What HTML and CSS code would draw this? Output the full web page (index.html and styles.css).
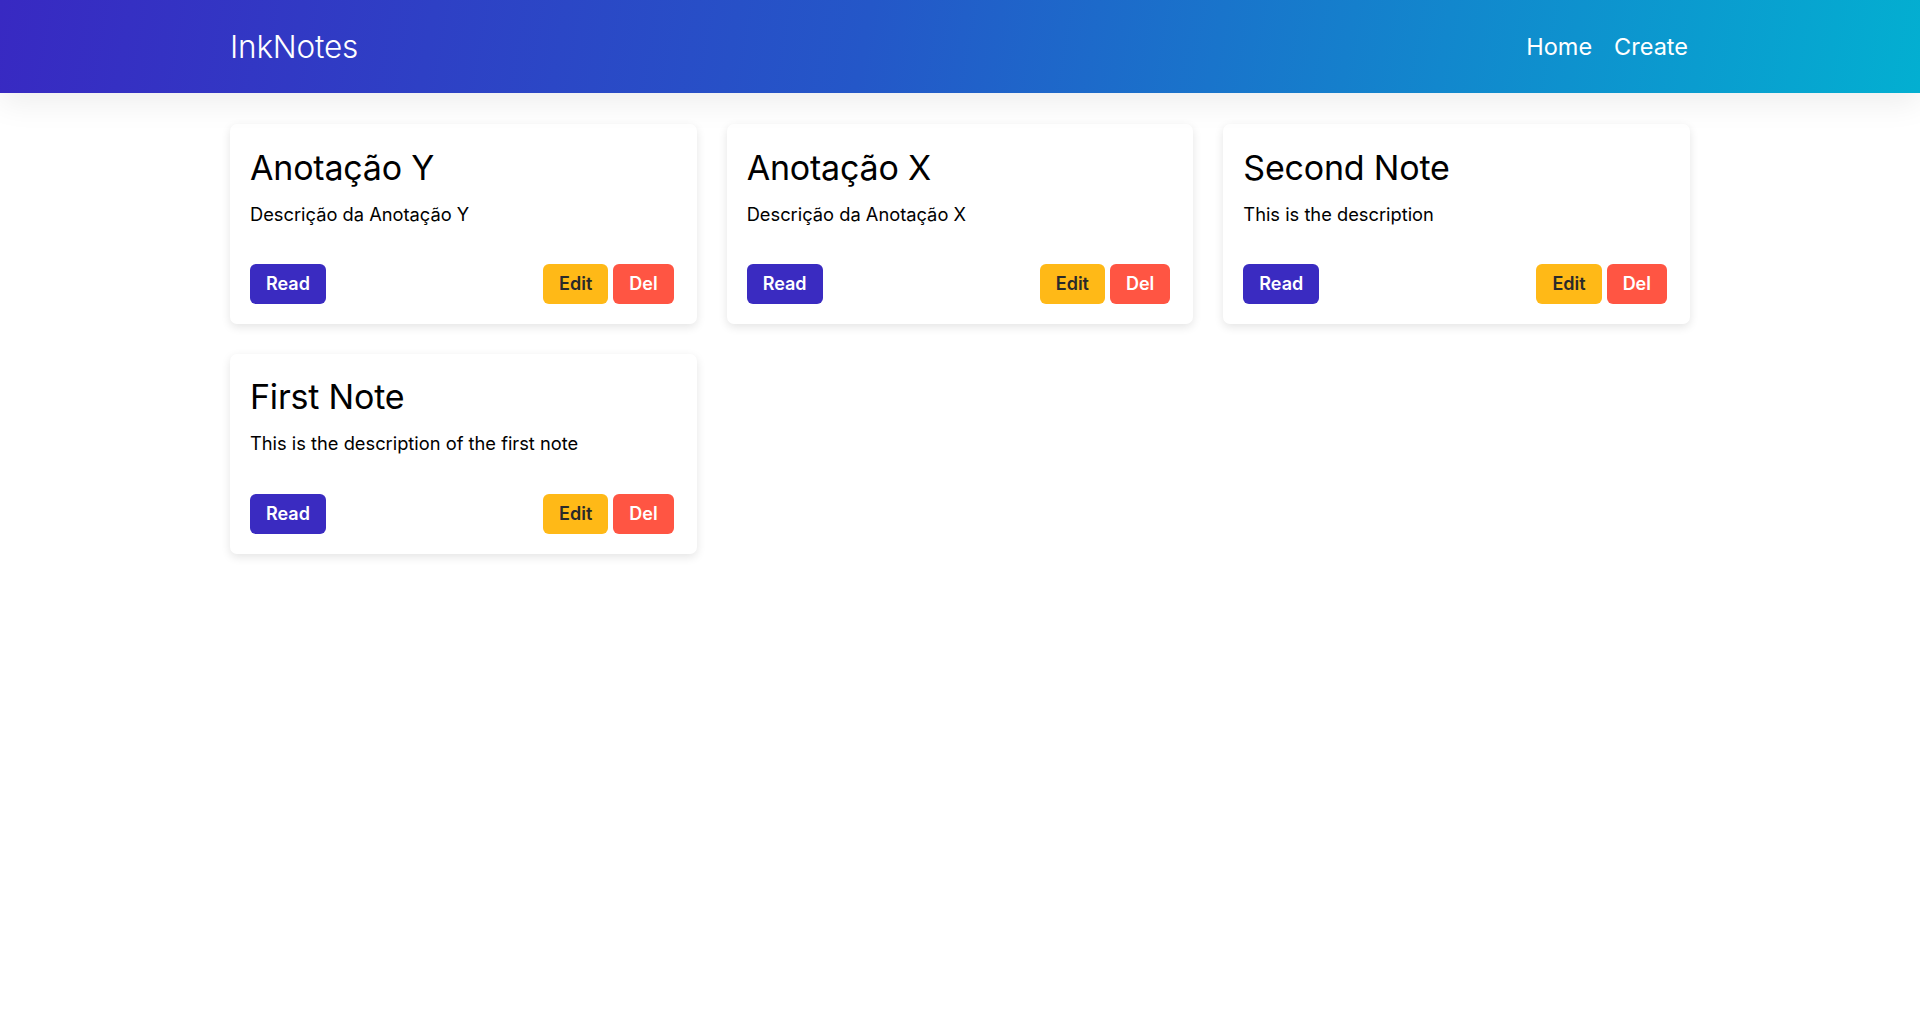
FILE: index.html
```html
<!DOCTYPE html>
<html lang="en">
<head>
<meta charset="utf-8">
<title>InkNotes</title>
<link rel="stylesheet" href="styles.css">
</head>
<body>
<header class="navbar">
  <div class="nav-inner">
    <a class="brand" href="#">InkNotes</a>
    <nav class="nav-links">
      <a href="#">Home</a>
      <a href="#">Create</a>
    </nav>
  </div>
</header>
<main class="notes">
  <article class="card">
    <h2 class="card-title">Anotação Y</h2>
    <p class="card-text">Descrição da Anotação Y</p>
    <div class="card-actions">
      <a class="btn btn-read" href="#">Read</a>
      <div class="btn-group">
        <a class="btn btn-edit" href="#">Edit</a>
        <a class="btn btn-del" href="#">Del</a>
      </div>
    </div>
  </article>
  <article class="card">
    <h2 class="card-title">Anotação X</h2>
    <p class="card-text">Descrição da Anotação X</p>
    <div class="card-actions">
      <a class="btn btn-read" href="#">Read</a>
      <div class="btn-group">
        <a class="btn btn-edit" href="#">Edit</a>
        <a class="btn btn-del" href="#">Del</a>
      </div>
    </div>
  </article>
  <article class="card">
    <h2 class="card-title">Second Note</h2>
    <p class="card-text">This is the description</p>
    <div class="card-actions">
      <a class="btn btn-read" href="#">Read</a>
      <div class="btn-group">
        <a class="btn btn-edit" href="#">Edit</a>
        <a class="btn btn-del" href="#">Del</a>
      </div>
    </div>
  </article>
  <article class="card">
    <h2 class="card-title">First Note</h2>
    <p class="card-text">This is the description of the first note</p>
    <div class="card-actions">
      <a class="btn btn-read" href="#">Read</a>
      <div class="btn-group">
        <a class="btn btn-edit" href="#">Edit</a>
        <a class="btn btn-del" href="#">Del</a>
      </div>
    </div>
  </article>
</main>
</body>
</html>
```

FILE: styles.css
```css
* { box-sizing: border-box; }

html, body {
  margin: 0;
  padding: 0;
  background: #ffffff;
  font-family: Inter, "Noto Sans", "Liberation Sans", sans-serif;
  color: #000;
}

body { min-height: 100vh; }

a { text-decoration: none; }

.navbar {
  height: 93px;
  background: linear-gradient(100deg, #3829c2 0%, #2457c8 45%, #03afd1 100%);
  box-shadow: 0 10px 30px rgba(0, 0, 0, 0.07);
  position: relative;
  z-index: 1;
}

.nav-inner {
  width: 1460px;
  height: 100%;
  margin: 0 auto;
  display: flex;
  align-items: center;
  justify-content: space-between;
}

.brand {
  color: #ffffff;
  font-size: 31.5px;
  font-weight: 300;
  letter-spacing: -0.2px;
  line-height: 1;
}

.nav-links {
  display: flex;
  gap: 22px;
  padding-right: 2px;
}

.nav-links a {
  color: #ffffff;
  font-size: 23.5px;
  font-weight: 400;
  line-height: 1;
}

.notes {
  width: 1460px;
  margin: 0 auto;
  padding: 31px 0 40px;
  display: grid;
  grid-template-columns: repeat(3, 1fr);
  gap: 30px;
}

.card {
  background: #ffffff;
  border-radius: 7px;
  box-shadow: 0 3px 10px rgba(0, 0, 0, 0.11);
  padding: 23.5px 23px 20px 20px;
  display: flex;
  flex-direction: column;
}

.card-title {
  margin: 0 0 12.3px 0;
  font-size: 34px;
  font-weight: 400;
  line-height: 1.2;
  letter-spacing: -0.2px;
}

.card-text {
  margin: 0 0 36.4px 0;
  font-size: 18.3px;
  line-height: 1.5;
}

.card-actions {
  display: flex;
  justify-content: space-between;
  align-items: center;
}

.btn-group {
  display: flex;
  gap: 5px;
}

.btn {
  display: inline-block;
  padding: 8px 16px;
  font-size: 18px;
  font-weight: 600;
  line-height: 23.4px;
  border-radius: 6px;
}

.btn-read {
  background: #3a2bc1;
  color: #ffffff;
}

.btn-edit {
  background: #ffb917;
  color: #2a2a2a;
}

.btn-del {
  background: #ff5543;
  color: #ffffff;
}
```
